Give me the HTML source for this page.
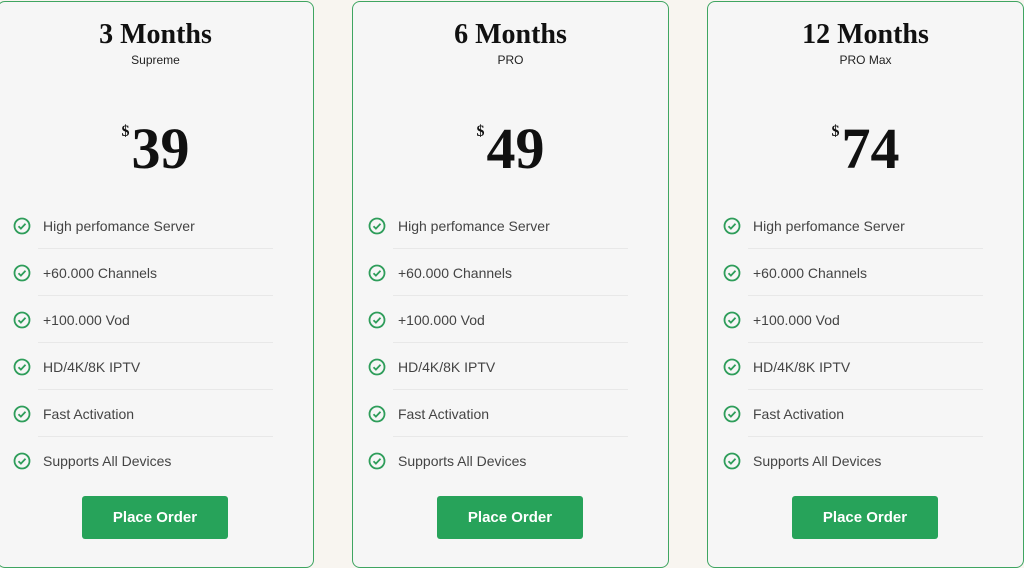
<!DOCTYPE html>
<html style="overflow:hidden;height:568px"><head><style>
body{margin:0;width:1024px;height:568px;background:#f8f5f0;position:relative;overflow:hidden;font-family:"Liberation Sans",sans-serif}
.card{position:absolute;top:1px;width:317px;height:567px;background:#f6f6f6;border:1px solid #3fa561;border-radius:8px;box-sizing:border-box}
.t{position:absolute;top:17px;left:0;right:0;text-align:center;font-family:"Liberation Serif",serif;font-weight:bold;font-size:28px;color:#111}
.s{position:absolute;top:51px;left:0;right:0;text-align:center;font-size:12px;color:#222}
.p{position:absolute;top:112px;left:0;right:0;text-align:center;font-family:"Liberation Serif",serif;font-weight:bold;font-size:58px;color:#111;line-height:70px}
.p sup{font-size:16px;vertical-align:top;position:relative;top:8px;margin-right:2px;line-height:20px}
.f{position:absolute;left:15px;font-size:14px;color:#444;height:20px;line-height:20px}
.f svg{position:absolute;left:0;top:1px}
.f span{position:absolute;left:30px;white-space:nowrap}
.ln{position:absolute;left:40px;width:235px;height:1px;background:#e8e8e8}
.b{position:absolute;left:84px;top:494px;width:146px;height:43px;background:#27a35a;border-radius:3px;color:#fff;font-weight:bold;font-size:15px;text-align:center;line-height:43px}
</style></head><body>
<div class="card" style="left:-3px"><div class="t">3 Months</div><div class="s">Supreme</div><div class="p"><sup>$</sup>39</div>
<div class="f" style="top:214px"><svg width="18" height="18" viewBox="0 0 18 18"><circle cx="9" cy="9" r="7.5" fill="none" stroke="#2e9d5a" stroke-width="1.8"/><path d="M5.5 9.2l2.4 2.4 4.6-4.8" fill="none" stroke="#2e9d5a" stroke-width="1.8"/></svg><span>High perfomance Server</span></div><div class="ln" style="top:246px"></div>
<div class="f" style="top:261px"><svg width="18" height="18" viewBox="0 0 18 18"><circle cx="9" cy="9" r="7.5" fill="none" stroke="#2e9d5a" stroke-width="1.8"/><path d="M5.5 9.2l2.4 2.4 4.6-4.8" fill="none" stroke="#2e9d5a" stroke-width="1.8"/></svg><span>+60.000 Channels</span></div><div class="ln" style="top:293px"></div>
<div class="f" style="top:308px"><svg width="18" height="18" viewBox="0 0 18 18"><circle cx="9" cy="9" r="7.5" fill="none" stroke="#2e9d5a" stroke-width="1.8"/><path d="M5.5 9.2l2.4 2.4 4.6-4.8" fill="none" stroke="#2e9d5a" stroke-width="1.8"/></svg><span>+100.000 Vod</span></div><div class="ln" style="top:340px"></div>
<div class="f" style="top:355px"><svg width="18" height="18" viewBox="0 0 18 18"><circle cx="9" cy="9" r="7.5" fill="none" stroke="#2e9d5a" stroke-width="1.8"/><path d="M5.5 9.2l2.4 2.4 4.6-4.8" fill="none" stroke="#2e9d5a" stroke-width="1.8"/></svg><span>HD/4K/8K IPTV</span></div><div class="ln" style="top:387px"></div>
<div class="f" style="top:402px"><svg width="18" height="18" viewBox="0 0 18 18"><circle cx="9" cy="9" r="7.5" fill="none" stroke="#2e9d5a" stroke-width="1.8"/><path d="M5.5 9.2l2.4 2.4 4.6-4.8" fill="none" stroke="#2e9d5a" stroke-width="1.8"/></svg><span>Fast Activation</span></div><div class="ln" style="top:434px"></div>
<div class="f" style="top:449px"><svg width="18" height="18" viewBox="0 0 18 18"><circle cx="9" cy="9" r="7.5" fill="none" stroke="#2e9d5a" stroke-width="1.8"/><path d="M5.5 9.2l2.4 2.4 4.6-4.8" fill="none" stroke="#2e9d5a" stroke-width="1.8"/></svg><span>Supports All Devices</span></div>
<div class="b">Place Order</div></div>

<div class="card" style="left:352px"><div class="t">6 Months</div><div class="s">PRO</div><div class="p"><sup>$</sup>49</div>
<div class="f" style="top:214px"><svg width="18" height="18" viewBox="0 0 18 18"><circle cx="9" cy="9" r="7.5" fill="none" stroke="#2e9d5a" stroke-width="1.8"/><path d="M5.5 9.2l2.4 2.4 4.6-4.8" fill="none" stroke="#2e9d5a" stroke-width="1.8"/></svg><span>High perfomance Server</span></div><div class="ln" style="top:246px"></div>
<div class="f" style="top:261px"><svg width="18" height="18" viewBox="0 0 18 18"><circle cx="9" cy="9" r="7.5" fill="none" stroke="#2e9d5a" stroke-width="1.8"/><path d="M5.5 9.2l2.4 2.4 4.6-4.8" fill="none" stroke="#2e9d5a" stroke-width="1.8"/></svg><span>+60.000 Channels</span></div><div class="ln" style="top:293px"></div>
<div class="f" style="top:308px"><svg width="18" height="18" viewBox="0 0 18 18"><circle cx="9" cy="9" r="7.5" fill="none" stroke="#2e9d5a" stroke-width="1.8"/><path d="M5.5 9.2l2.4 2.4 4.6-4.8" fill="none" stroke="#2e9d5a" stroke-width="1.8"/></svg><span>+100.000 Vod</span></div><div class="ln" style="top:340px"></div>
<div class="f" style="top:355px"><svg width="18" height="18" viewBox="0 0 18 18"><circle cx="9" cy="9" r="7.5" fill="none" stroke="#2e9d5a" stroke-width="1.8"/><path d="M5.5 9.2l2.4 2.4 4.6-4.8" fill="none" stroke="#2e9d5a" stroke-width="1.8"/></svg><span>HD/4K/8K IPTV</span></div><div class="ln" style="top:387px"></div>
<div class="f" style="top:402px"><svg width="18" height="18" viewBox="0 0 18 18"><circle cx="9" cy="9" r="7.5" fill="none" stroke="#2e9d5a" stroke-width="1.8"/><path d="M5.5 9.2l2.4 2.4 4.6-4.8" fill="none" stroke="#2e9d5a" stroke-width="1.8"/></svg><span>Fast Activation</span></div><div class="ln" style="top:434px"></div>
<div class="f" style="top:449px"><svg width="18" height="18" viewBox="0 0 18 18"><circle cx="9" cy="9" r="7.5" fill="none" stroke="#2e9d5a" stroke-width="1.8"/><path d="M5.5 9.2l2.4 2.4 4.6-4.8" fill="none" stroke="#2e9d5a" stroke-width="1.8"/></svg><span>Supports All Devices</span></div>
<div class="b">Place Order</div></div>

<div class="card" style="left:707px"><div class="t">12 Months</div><div class="s">PRO Max</div><div class="p"><sup>$</sup>74</div>
<div class="f" style="top:214px"><svg width="18" height="18" viewBox="0 0 18 18"><circle cx="9" cy="9" r="7.5" fill="none" stroke="#2e9d5a" stroke-width="1.8"/><path d="M5.5 9.2l2.4 2.4 4.6-4.8" fill="none" stroke="#2e9d5a" stroke-width="1.8"/></svg><span>High perfomance Server</span></div><div class="ln" style="top:246px"></div>
<div class="f" style="top:261px"><svg width="18" height="18" viewBox="0 0 18 18"><circle cx="9" cy="9" r="7.5" fill="none" stroke="#2e9d5a" stroke-width="1.8"/><path d="M5.5 9.2l2.4 2.4 4.6-4.8" fill="none" stroke="#2e9d5a" stroke-width="1.8"/></svg><span>+60.000 Channels</span></div><div class="ln" style="top:293px"></div>
<div class="f" style="top:308px"><svg width="18" height="18" viewBox="0 0 18 18"><circle cx="9" cy="9" r="7.5" fill="none" stroke="#2e9d5a" stroke-width="1.8"/><path d="M5.5 9.2l2.4 2.4 4.6-4.8" fill="none" stroke="#2e9d5a" stroke-width="1.8"/></svg><span>+100.000 Vod</span></div><div class="ln" style="top:340px"></div>
<div class="f" style="top:355px"><svg width="18" height="18" viewBox="0 0 18 18"><circle cx="9" cy="9" r="7.5" fill="none" stroke="#2e9d5a" stroke-width="1.8"/><path d="M5.5 9.2l2.4 2.4 4.6-4.8" fill="none" stroke="#2e9d5a" stroke-width="1.8"/></svg><span>HD/4K/8K IPTV</span></div><div class="ln" style="top:387px"></div>
<div class="f" style="top:402px"><svg width="18" height="18" viewBox="0 0 18 18"><circle cx="9" cy="9" r="7.5" fill="none" stroke="#2e9d5a" stroke-width="1.8"/><path d="M5.5 9.2l2.4 2.4 4.6-4.8" fill="none" stroke="#2e9d5a" stroke-width="1.8"/></svg><span>Fast Activation</span></div><div class="ln" style="top:434px"></div>
<div class="f" style="top:449px"><svg width="18" height="18" viewBox="0 0 18 18"><circle cx="9" cy="9" r="7.5" fill="none" stroke="#2e9d5a" stroke-width="1.8"/><path d="M5.5 9.2l2.4 2.4 4.6-4.8" fill="none" stroke="#2e9d5a" stroke-width="1.8"/></svg><span>Supports All Devices</span></div>
<div class="b">Place Order</div></div>
</body></html>
